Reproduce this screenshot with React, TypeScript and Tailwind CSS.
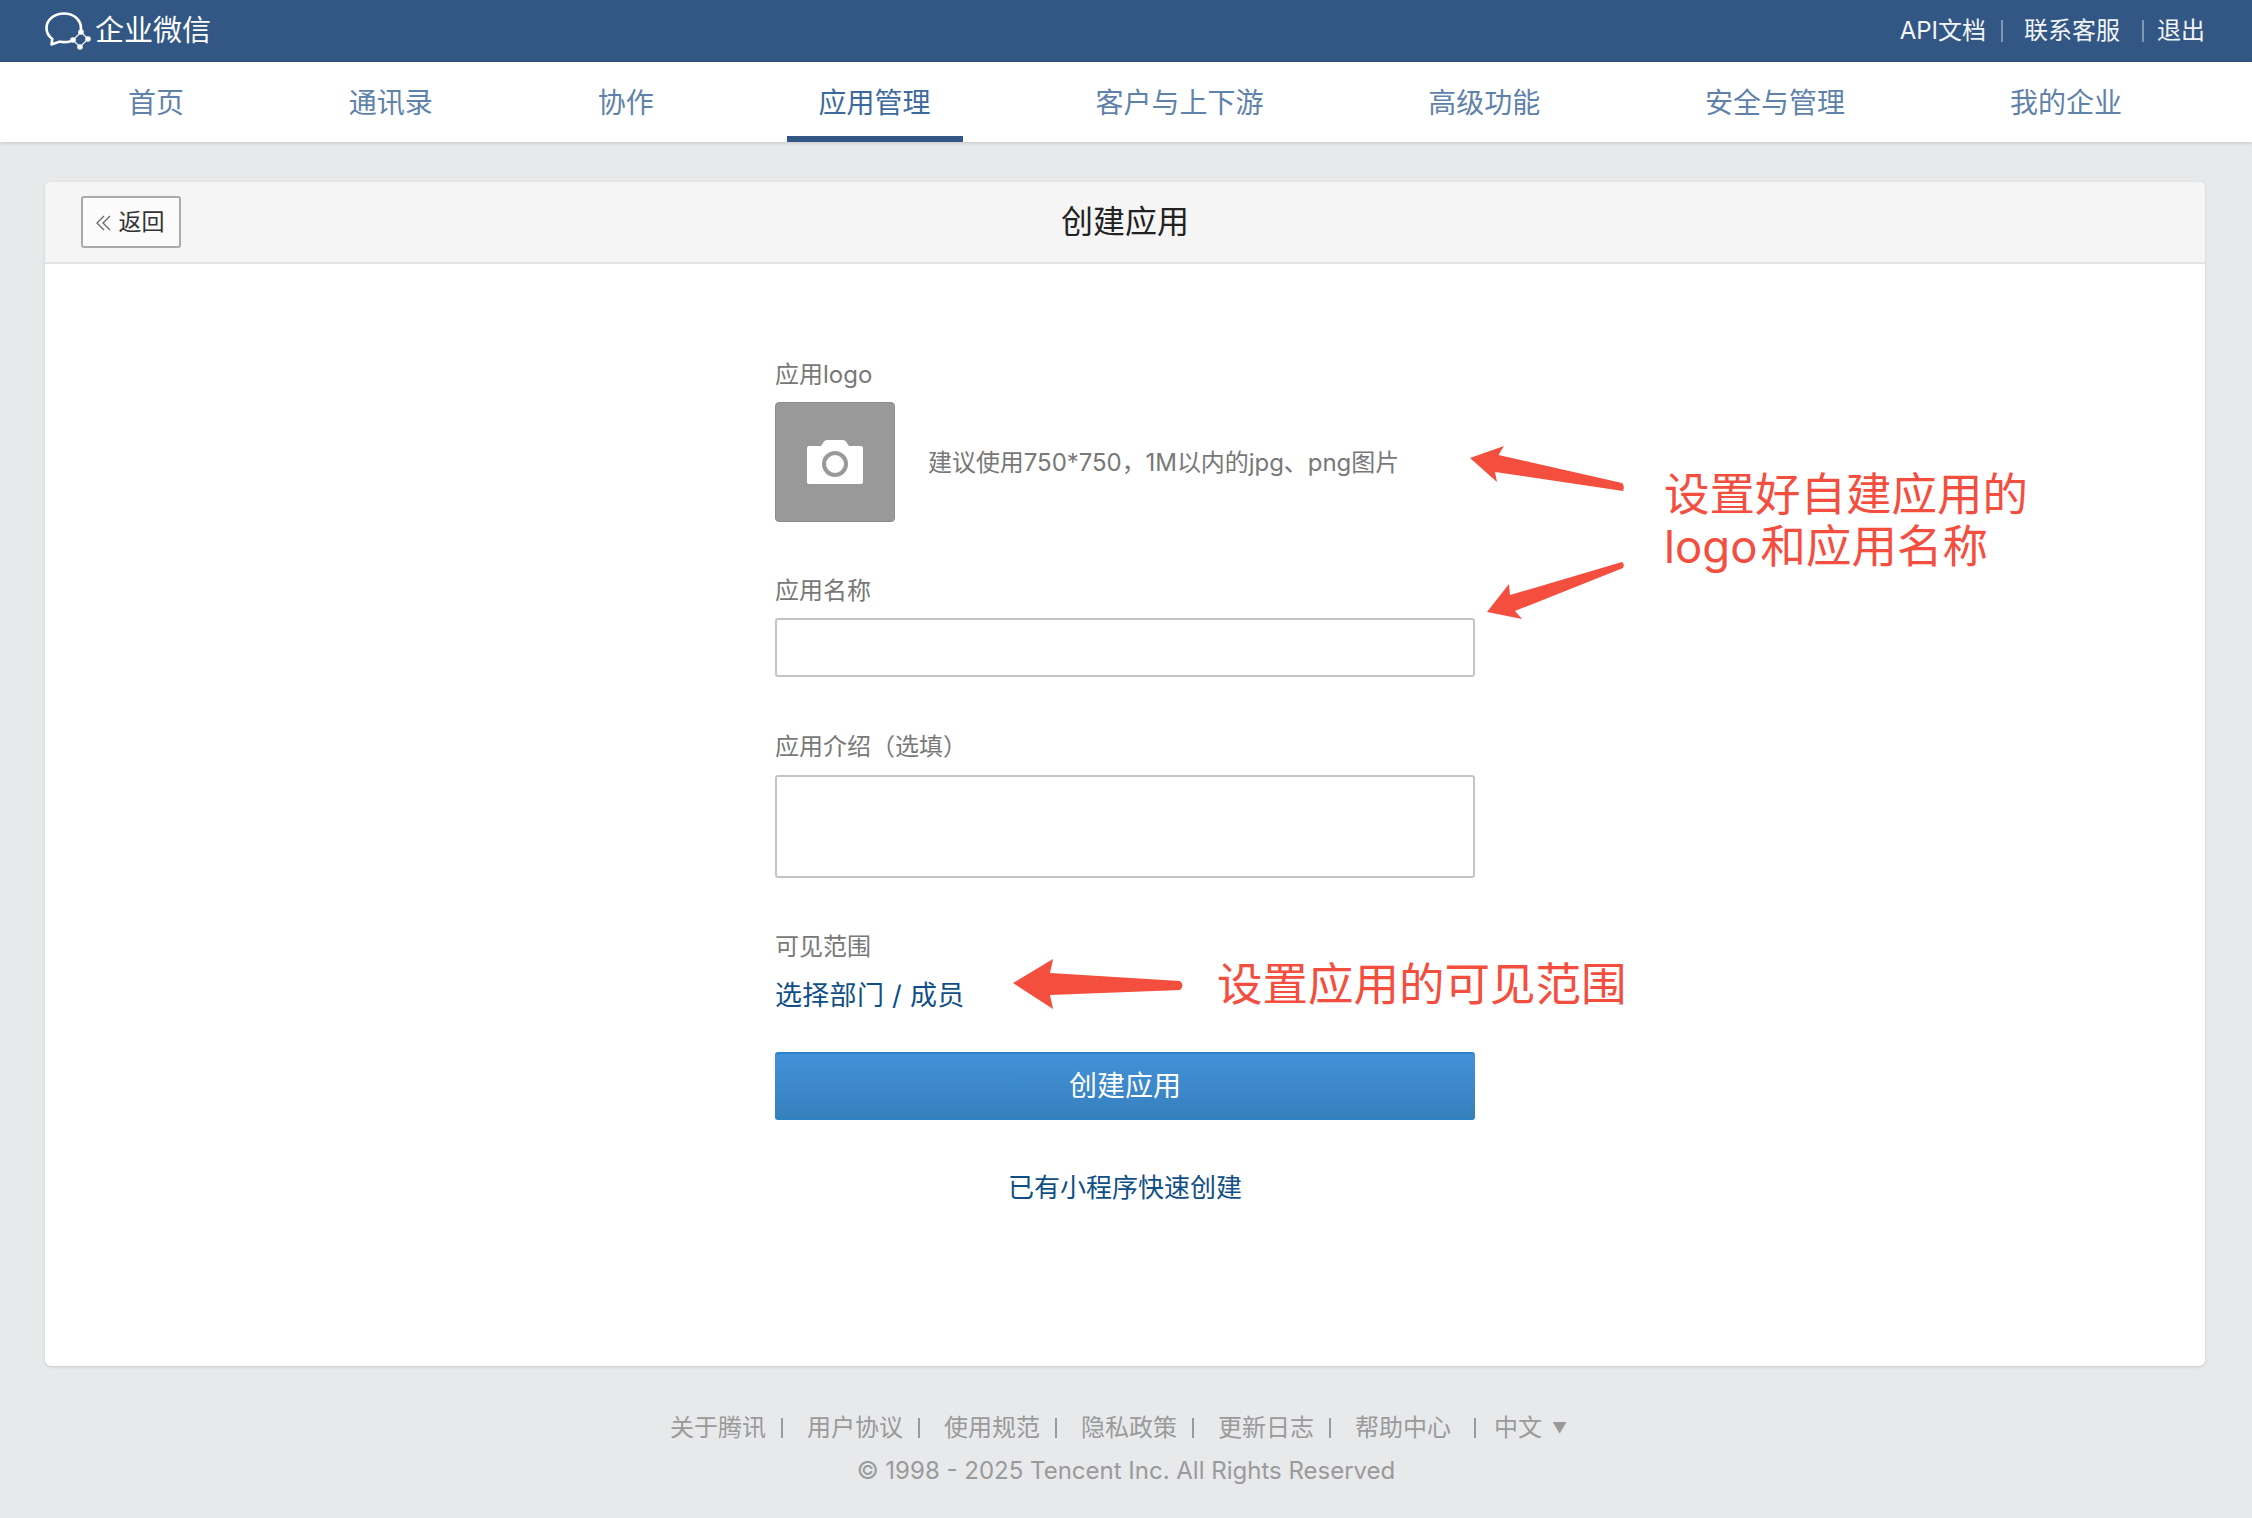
const font = { fontFamily: '"Inter", "Noto Sans CJK SC", sans-serif' };

const navItems = ["首页", "通讯录", "协作", "应用管理", "客户与上下游", "高级功能", "安全与管理", "我的企业"];
const footerLinks = ["关于腾讯", "用户协议", "使用规范", "隐私政策", "更新日志"];

const Logo = () => (
  <svg width="47" height="40" viewBox="45 10 47 40" fill="none" stroke="#fff">
    <path d="M81 28.5C81.5 19 74 12.5 64 12.5C54 12.5 46.5 19 46.5 27C46.5 31.5 49 35.5 52.3 38L51.5 43.5L59.5 40.6C62.5 41.3 66 41.4 70 40.6" strokeWidth="2.6" strokeLinecap="round" strokeLinejoin="round" />
    <path d="M81 31L88 38L80 46L73 39Z" strokeWidth="1.2" />
    <g fill="#fff" stroke="none">
      <circle cx="81" cy="31" r="2.8" />
      <circle cx="88" cy="38" r="2.8" />
      <circle cx="80" cy="46" r="2.8" />
      <circle cx="73" cy="39" r="2.8" />
    </g>
  </svg>
);

const Camera = () => (
  <svg width="56" height="44" viewBox="0 0 56 44">
    <path d="M2 6H14L17 1.5Q18 0 20 0H36Q38 0 39 1.5L42 6H54Q56 6 56 8V42Q56 44 54 44H2Q0 44 0 42V8Q0 6 2 6Z" fill="#fff" />
    <circle cx="28" cy="24" r="11" fill="#fff" stroke="#999" strokeWidth="4" />
  </svg>
);

const Annotations = () => (
  <>
    <svg className="absolute left-0 top-0" width="2252" height="1518" fill="#f44e3f">
      <path d="M1470 458L1504 446L1498.5 455L1622 483Q1625 486 1623 491L1495 472L1497 482Z" />
      <path d="M1622 562Q1625 564 1623 568L1515 611L1522 619L1487 612L1509 584L1510 595Z" />
      <path d="M1013 983L1053 959L1050 973L1180 981Q1185 985 1180 990L1050 995L1053 1009Z" />
    </svg>
    <div className="absolute left-[1664px] top-[469px] text-[45.5px] leading-[52px] text-[#f44e3f] whitespace-nowrap">
      <div>设置好自建应用的</div>
      <div className="flex">
        <span>logo</span>
        <span className="ml-[3px]">和应用名称</span>
      </div>
    </div>
    <div className="absolute left-[1217px] top-[958px] text-[45.5px] leading-[53px] text-[#f44e3f] whitespace-nowrap">
      设置应用的可见范围
    </div>
  </>
);

const App = () => {
  return (
    <div style={font} className="relative min-h-[1518px] bg-[#e8e9eb]">
      <div className="h-[62px] bg-[#335784] pl-[45px] pr-[47px] flex items-center justify-between text-white">
        <div className="flex items-center gap-[3px]">
          <Logo />
          <span className="text-[29px] leading-[40px]">企业微信</span>
        </div>
        <div className="flex items-center text-[24px] leading-[32px] text-[#f2f5f8]">
          <span>API文档</span>
          <span className="ml-[15px] mr-[21px] w-[2px] h-[22px] bg-[#7d97b5]"></span>
          <span>联系客服</span>
          <span className="ml-[22px] mr-[13px] w-[2px] h-[22px] bg-[#7d97b5]"></span>
          <span>退出</span>
        </div>
      </div>

      <nav className="h-[80px] bg-white shadow-[0_1px_4px_rgba(0,0,0,0.16)] pl-[96px] pr-[98px] flex justify-between">
        {navItems.map((item) => (
          <a
            key={item}
            className={
              item === "应用管理"
                ? "h-full px-[32px] pt-[1px] flex items-center text-[28px] text-[#3d6a9c] shadow-[inset_0_-6px_0_#335784]"
                : "h-full px-[32px] pt-[1px] flex items-center text-[28px] text-[#5f82ab]"
            }
          >
            {item}
          </a>
        ))}
      </nav>

      <main className="pt-[40px] pl-[45px] pr-[47px]">
        <div className="h-[1184px] bg-white rounded-[6px] shadow-[0_1px_3px_rgba(0,0,0,0.14)] overflow-hidden">
          <div className="relative h-[82px] bg-[#f5f5f5] border-b-2 border-[#e1e4e7] flex items-center justify-center">
            <button className="absolute left-[36px] top-[14px] w-[100px] h-[52px] pt-[1px] flex items-center justify-center gap-[8px] border-2 border-[#aaaaaa] rounded-[3px] bg-[#fbfbfb] text-[23px] text-[#333]">
              <svg className="-ml-[2px]" width="15" height="16" viewBox="0 0 15 16" fill="none" stroke="#666" strokeWidth="1.3">
                <path d="M8 1L1 8L8 15M14 1L7 8L14 15" />
              </svg>
              <span>返回</span>
            </button>
            <h1 className="text-[32px] text-[#222]">创建应用</h1>
          </div>

          <form className="w-[700px] mx-auto pt-[95px] text-[24px] leading-[32px] text-[#787878]">
            <label className="block">应用logo</label>
            <div className="mt-[11px] flex items-center">
              <div className="w-[120px] h-[120px] flex items-center justify-center bg-[#999999] border border-[#8c8c8c] rounded-[4px]">
                <Camera />
              </div>
              <span className="ml-[33px] pt-[2px] tracking-[-0.05px]">建议使用750*750，1M以内的jpg、png图片</span>
            </div>

            <label className="block mt-[53px]">应用名称</label>
            <input className="block mt-[11px] w-full h-[59px] border-2 border-[#c4c4c4] rounded-[3px] bg-white" />

            <label className="block mt-[54px]">应用介绍（选填）</label>
            <textarea className="block mt-[12px] w-full h-[103px] border-2 border-[#c4c4c4] rounded-[3px] bg-white resize-none" />

            <label className="block mt-[53px]">可见范围</label>
            <a className="block mt-[13px] text-[27px] leading-[40px] tracking-[0.3px] text-[#0f4f88]">选择部门 / 成员</a>

            <button
              type="button"
              className="block mt-[36px] w-full h-[68px] rounded-[3px] border-y-2 border-[#2b82c6] bg-gradient-to-b from-[#4391d8] to-[#3680bd] text-[28px] text-white"
            >
              创建应用
            </button>

            <a className="block mt-[52px] text-center text-[26px] text-[#0f4f88]">已有小程序快速创建</a>
          </form>
        </div>
      </main>

      <footer className="pt-[46px] text-[24px] leading-[32px] text-[#9a9a9a]">
        <div className="flex justify-center items-center pr-[15px]">
          {footerLinks.map((link) => (
            <div key={link} className="flex items-center">
              <span>{link}</span>
              <span className="ml-[15px] mr-[24px] w-[2px] h-[20px] bg-[#9a9a9a]"></span>
            </div>
          ))}
          <span>帮助中心</span>
          <span className="ml-[23px] mr-[18px] w-[2px] h-[20px] bg-[#9a9a9a]"></span>
          <span>中文</span>
          <span className="ml-[10px] text-[15px]">▼</span>
        </div>
        <div className="mt-[11px] text-center">© 1998 - 2025 Tencent Inc. All Rights Reserved</div>
      </footer>

      <Annotations />
    </div>
  );
};

export default App;
